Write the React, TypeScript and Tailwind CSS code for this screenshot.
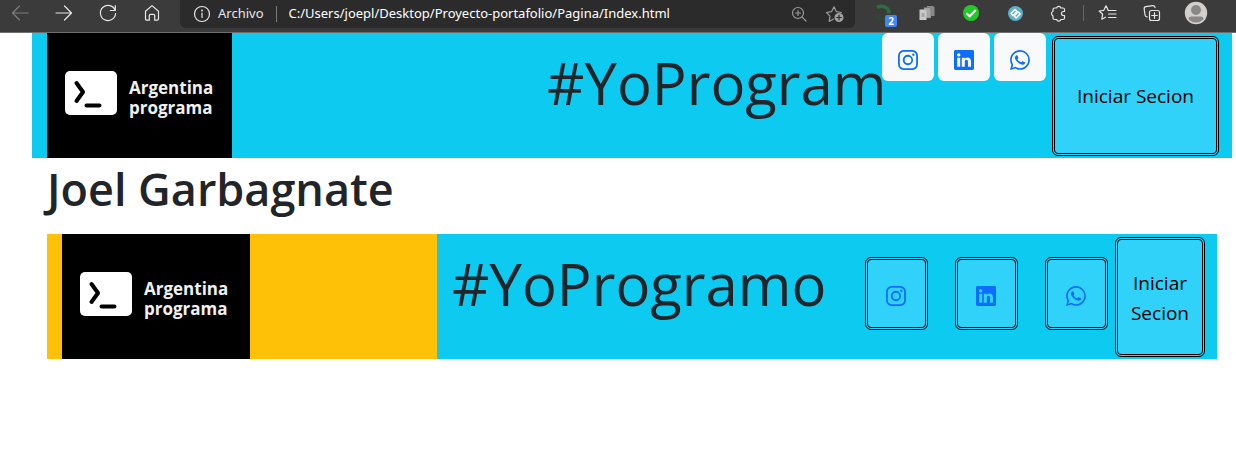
import type { ReactNode } from "react";
import { BsInstagram, BsLinkedin, BsWhatsapp } from "react-icons/bs";

function Stroke({ children, className = "" }: { children: ReactNode; className?: string }) {
  return (
    <svg
      viewBox="0 0 24 24"
      className={`size-6 ${className}`}
      fill="none"
      stroke="currentColor"
      strokeWidth="1.2"
      strokeLinecap="round"
      strokeLinejoin="round"
      aria-hidden="true"
    >
      {children}
    </svg>
  );
}

function ToolButton({ label, children }: { label: string; children: ReactNode }) {
  return (
    <button type="button" aria-label={label} className="relative size-6 shrink-0">
      {children}
    </button>
  );
}

function BrowserBar() {
  return (
    <header className="flex h-[33px] items-start border-b border-[#6e6e6e] bg-[#3b3b3b] text-[#e6e6e6]">
      <nav className="flex gap-5 pt-px pl-2" aria-label="Navegador">
        <ToolButton label="Atrás">
          <Stroke className="text-[#7d7d7d]">
            <path d="M20 12H4.500M11.500 5 4.500 12l7 7" />
          </Stroke>
        </ToolButton>
        <ToolButton label="Adelante">
          <Stroke>
            <path d="M4 12h15.500M12.500 5l7 7-7 7" />
          </Stroke>
        </ToolButton>
        <ToolButton label="Actualizar">
          <Stroke>
            <path d="M19.200 9.500A7.600 7.600 0 1 0 19.600 12.500M19.300 4.500v5h-5" />
          </Stroke>
        </ToolButton>
        <ToolButton label="Inicio">
          <Stroke>
            <path d="M5.500 10.300 12 4.600l6.500 5.700V18a1.200 1.200 0 0 1-1.200 1.200h-2.600V14.500a1.200 1.200 0 0 0-1.200-1.200h-3a1.200 1.200 0 0 0-1.200 1.200v4.700H6.700A1.200 1.200 0 0 1 5.500 18z" />
          </Stroke>
        </ToolButton>
      </nav>

      <div className="ml-4 flex h-[28px] min-w-0 flex-1 items-center rounded-b-md bg-[#2b2b2b] pr-2 pl-[10px] font-['Noto_Sans','Open_Sans',sans-serif]">
        <Stroke>
          <circle cx="12" cy="12" r="7.500" />
          <path d="M12 11v4.500" />
          <circle cx="12" cy="8.500" r=".4" />
        </Stroke>
        <label htmlFor="address" className="ml-1 text-[13px]">
          Archivo
        </label>
        <span className="mx-3 h-4 w-px bg-[#7a7a7a]" />
        <input
          id="address"
          type="text"
          defaultValue="C:/Users/joepl/Desktop/Proyecto-portafolio/Pagina/Index.html"
          className="min-w-0 flex-1 bg-transparent text-[13px] text-white outline-none"
        />
        <div className="flex gap-3 text-[#9a9a9a]">
          <ToolButton label="Zoom">
            <Stroke>
              <circle cx="11" cy="11" r="5.500" />
              <path d="M15.200 15.200 19 19M8.500 11h5M11 8.500v5" />
            </Stroke>
          </ToolButton>
          <ToolButton label="Agregar a favoritos">
            <Stroke>
              <path d="M10.500 17 6.200 19.400 7 14.100 3.500 10.500l5-.8L11 4.800l2.400 4.900 5 .8" />
              <circle cx="16" cy="15.500" r="4.500" fill="#a0a0a0" stroke="none" />
              <path d="M13.700 15.500h4.600M16 13.200v4.600" stroke="#2b2b2b" />
            </Stroke>
          </ToolButton>
        </div>
      </div>

      <div className="flex gap-5 pt-px pl-4">
        <ToolButton label="Extensión con 2 avisos">
          <svg viewBox="0 0 24 24" className="size-6" fill="none" aria-hidden="true">
            <path d="M6 6.500c6-3 12 0 12 6" stroke="#2f6b40" strokeWidth="3.500" />
            <path d="M5 15c3 4 8 4 11 1" stroke="#2b4a33" strokeWidth="2.500" />
          </svg>
          <span className="absolute top-[14px] left-[14px] flex h-3 w-3 items-center justify-center rounded-xs bg-[#4285f4] text-[10px] font-bold text-white">
            2
          </span>
        </ToolButton>
        <ToolButton label="Copiar">
          <svg viewBox="0 0 24 24" className="size-6" aria-hidden="true">
            <path d="M12 5h6l1.500 1.500V15H12z" fill="#8b8b8b" />
            <path d="M9 6.500h5.500L16 8v9H9z" fill="#a6a6a6" stroke="#666" strokeWidth=".5" />
            <path d="M4.500 8.500h5.500L11.500 10v9h-7z" fill="#c9c9c9" />
            <path d="M6.500 12h3v4h-3z" fill="#a5a5a5" />
          </svg>
        </ToolButton>
        <ToolButton label="Verificado">
          <svg viewBox="0 0 24 24" className="size-6" aria-hidden="true">
            <circle cx="12" cy="12" r="8" fill="#22c928" />
            <path d="m7.500 12.300 3.200 3 6-6.300" fill="none" stroke="#fff" strokeWidth="2" />
          </svg>
        </ToolButton>
        <ToolButton label="Enlaces">
          <svg viewBox="0 0 24 24" className="size-6" fill="none" aria-hidden="true">
            <circle cx="12.500" cy="12.500" r="7.500" fill="#5fb0cb" />
            <path
              d="m8 12.500 4-4 2 2-4 4zm3.200 2.400 4-4 2 2-4 4z"
              stroke="#fff"
              strokeWidth="1.400"
              strokeLinejoin="round"
            />
          </svg>
        </ToolButton>
        <ToolButton label="Extensiones">
          <Stroke>
            <path d="M7.500 7h2.200a2.100 2.100 0 0 1 4.100 0H16a1.500 1.500 0 0 1 1.500 1.500v2h-1a2 2 0 0 0 0 4h1v2.500a1.500 1.500 0 0 1-1.500 1.500h-2.200a2.100 2.100 0 0 1-4.100 0H7.500A1.500 1.500 0 0 1 6 17v-2.300a2.200 2.200 0 0 1 0-4.200v-2A1.500 1.500 0 0 1 7.500 7z" />
          </Stroke>
        </ToolButton>
      </div>
      <span className="mt-[5px] ml-3 h-4 w-px bg-[#666]" />
      <div className="flex gap-5 pt-px pr-7 pl-3">
        <ToolButton label="Favoritos">
          <Stroke>
            <path d="M12 8.800 10 4.800 7.800 9.300l-4.600.7 3.400 3.300-.8 4.900 3.700-2M12 9.500h8M12.500 13H20M12.500 16.500H20" />
          </Stroke>
        </ToolButton>
        <ToolButton label="Colecciones">
          <Stroke>
            <path d="M7.200 15.800A2.200 2.200 0 0 1 5 14L4.200 8.200A2.200 2.200 0 0 1 6 5.700l6.500-1.100A2.200 2.200 0 0 1 15 6.500" />
            <rect x="9.500" y="9.500" width="10" height="10" rx="2" />
            <path d="M14.500 11.700v5.600M11.700 14.500h5.600" />
          </Stroke>
        </ToolButton>
        <ToolButton label="Perfil">
          <svg viewBox="0 0 24 24" className="size-6" aria-hidden="true">
            <circle cx="12" cy="12" r="11.200" fill="#d2d0ce" />
            <circle cx="12" cy="9" r="5" fill="#8a8886" />
            <path d="M4.500 18.500a2.800 2.800 0 0 1 2.500-3h10a2.800 2.800 0 0 1 2.500 3 11 11 0 0 1-15 0z" fill="#8a8886" />
          </svg>
        </ToolButton>
      </div>
    </header>
  );
}

function Logo({ className }: { className: string }) {
  return (
    <div className={`flex shrink-0 bg-black pt-[38px] pl-[18px] ${className}`}>
      <svg viewBox="0 0 52 44" className="h-11 w-[52px]" fill="none" aria-hidden="true">
        <rect width="52" height="44" rx="5" fill="#fff" />
        <path
          d="m11.500 12 6.500 9-6.500 9M21.500 34.500h13"
          stroke="#000"
          strokeWidth="4"
          strokeLinecap="round"
          strokeLinejoin="round"
        />
      </svg>
      <p className="mt-[7px] ml-3 font-['Open_Sans','Noto_Sans',sans-serif] text-[17px] leading-[20px] font-bold text-[#f0f0f0]">
        Argentina
        <br />
        programa
      </p>
    </div>
  );
}

const socials = [
  { name: "Instagram", href: "#instagram", Icon: BsInstagram },
  { name: "LinkedIn", href: "#linkedin", Icon: BsLinkedin },
  { name: "WhatsApp", href: "#whatsapp", Icon: BsWhatsapp },
];

export default function App() {
  return (
    <div className="min-h-screen bg-white font-['Open_Sans','Noto_Sans',sans-serif] text-[#212529]">
      <BrowserBar />
      <main className="mr-1 ml-8">
        <section className="flex h-[125px] bg-[#0dcaf0] pr-[13px] pl-[15px]">
          <Logo className="w-[185px]" />
          <p className="ml-auto w-[335px] shrink-0 pt-[12px] text-[58px] leading-[76px] whitespace-nowrap">
            #YoProgram
          </p>
          <div className="flex shrink-0 items-start gap-1">
            {socials.map(({ name, href, Icon }) => (
              <a
                key={name}
                href={href}
                aria-label={name}
                className="flex h-12 w-[52px] items-center justify-center rounded-md bg-[#f8f9fa] pt-[6px] text-[#0d6efd]"
              >
                <Icon size={20} />
              </a>
            ))}
          </div>
          <button
            type="button"
            className="mt-[3px] ml-[6px] h-[120px] w-[167px] shrink-0 rounded-md border-3 border-double border-black bg-[#31d2fa] pt-px text-[19px] text-black"
          >
            Iniciar Secion
          </button>
        </section>

        <div className="px-[15px]">
          <h1 className="pb-[14px] text-[45px] leading-[62px] font-semibold">Joel Garbagnate</h1>
          <section className="flex h-[125px]">
            <div className="w-1/3 bg-[#ffc107] pl-[15px]">
              <Logo className="h-full w-[188px]" />
            </div>
            <div className="flex w-2/3 bg-[#0dcaf0] pr-3 pl-[15px]">
              <p className="pt-[12px] text-[58px] leading-[76px]">#YoProgramo</p>
              <div className="ml-auto flex shrink-0 items-center gap-[27px] pb-[6px]">
                {socials.map(({ name, href, Icon }) => (
                  <a
                    key={name}
                    href={href}
                    aria-label={name}
                    className="flex h-[73px] w-[63px] items-center justify-center rounded-md border-3 border-double border-black bg-[#31d2fa] pt-1 pr-px text-[#0d6efd]"
                  >
                    <Icon size={20} />
                  </a>
                ))}
              </div>
              <button
                type="button"
                className="mt-[3px] ml-[7px] h-[120px] w-[90px] shrink-0 rounded-md border-3 border-double border-black bg-[#31d2fa] px-2 pt-px text-[19px] leading-[30px] text-black"
              >
                Iniciar Secion
              </button>
            </div>
          </section>
        </div>
      </main>
    </div>
  );
}
